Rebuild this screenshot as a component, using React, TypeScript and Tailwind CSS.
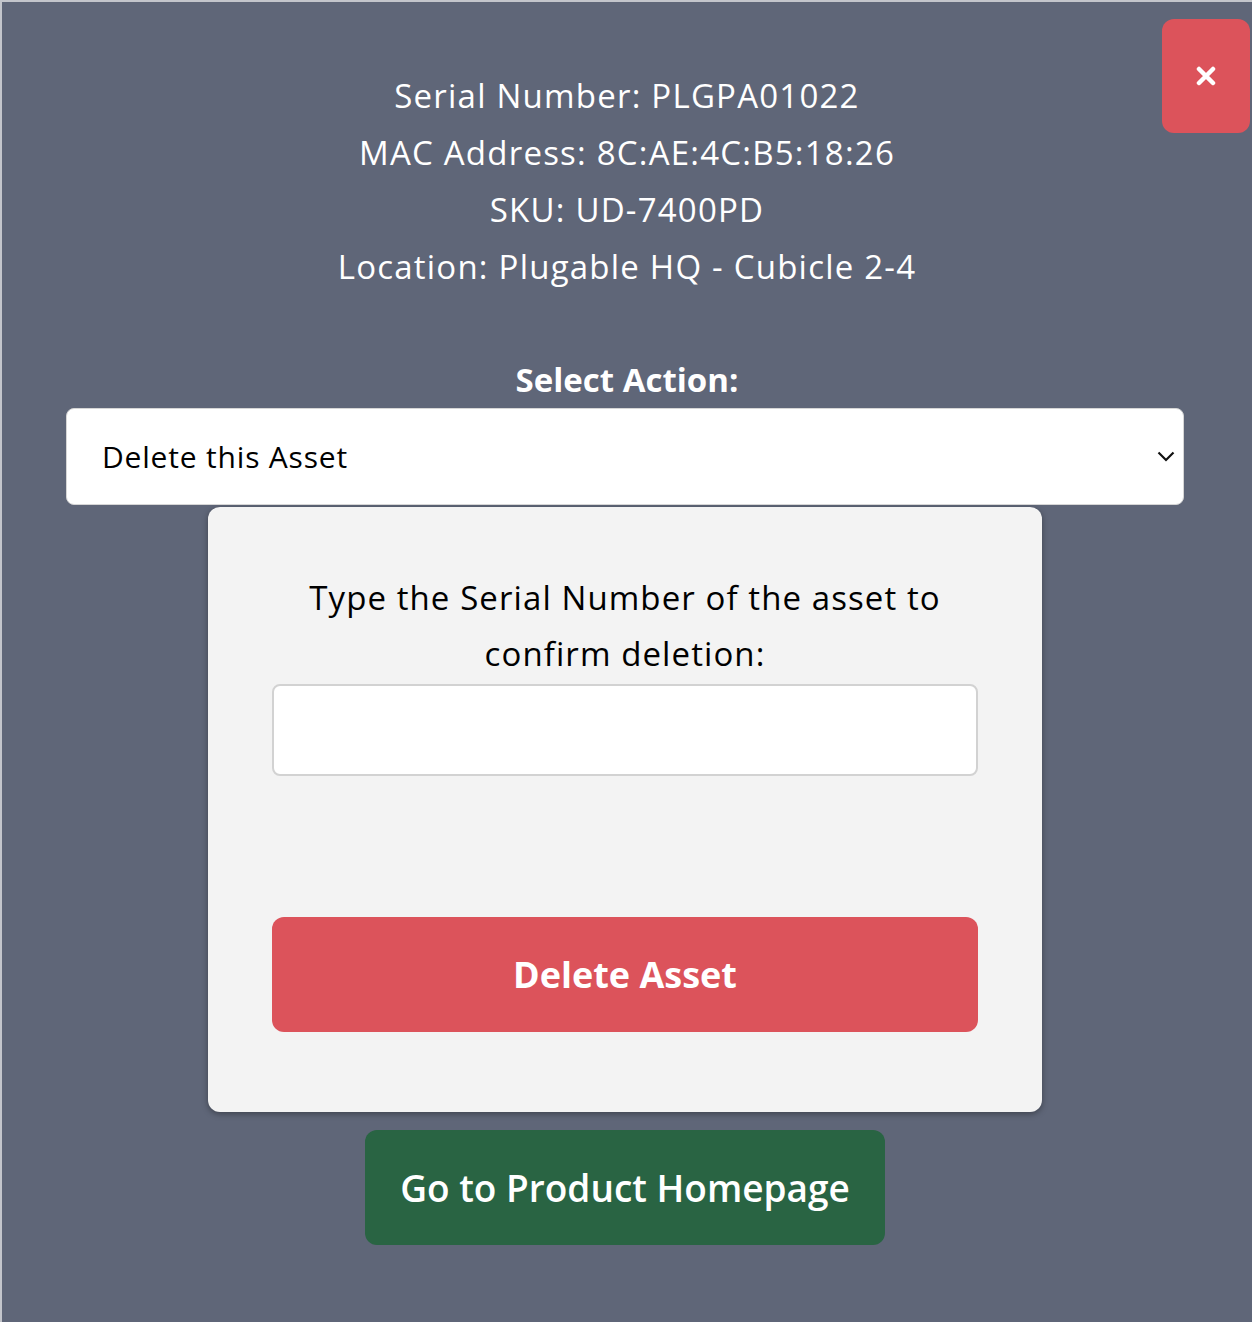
import React, { useState } from 'react';

const infoLines = [
  'Serial Number: PLGPA01022',
  'MAC Address: 8C:AE:4C:B5:18:26',
  'SKU: UD-7400PD',
  'Location: Plugable HQ - Cubicle 2-4',
];

const App: React.FC = () => {
  const [action, setAction] = useState('delete');
  const [serial, setSerial] = useState('');

  return (
    <div
      className="h-[1322px] w-[1252px] overflow-hidden border-l-2 border-t-2 border-[#c3c5cb] bg-[#5f6678] text-white"
      style={{ fontFamily: '"Open Sans", Lato, sans-serif' }}
    >
      <div className="flex justify-end pr-[2px] pt-[17px]">
        <button className="flex h-[114px] w-[88px] items-center justify-center rounded-xl bg-[#dc535b] text-white">
          <svg width="20" height="20" viewBox="0 0 20 20">
            <path d="M3 3 L17 17 M17 3 L3 17" stroke="white" strokeWidth="4.5" strokeLinecap="round" />
          </svg>
        </button>
      </div>

      <div className="-mt-[66px] flex flex-col items-center text-[33px] leading-[57px] tracking-[0.037em]">
        {infoLines.map((line) => (
          <div key={line}>{line}</div>
        ))}
      </div>

      <div className="mt-[56px] text-center text-[33px] font-bold leading-[57px]">Select Action:</div>

      <div className="pl-[64px] pr-[68px]">
        <div className="relative">
          <select
            value={action}
            onChange={(e) => setAction(e.target.value)}
            className="h-[97px] w-full appearance-none rounded-lg border border-[#d6d6d6] bg-white pl-[35px] text-[30px] tracking-[0.027em] text-black outline-none"
          >
            <option value="delete">Delete this Asset</option>
            <option value="move">Move this Asset</option>
          </select>
          <svg
            className="pointer-events-none absolute right-[9px] top-[43px]"
            width="18"
            height="11"
            viewBox="0 0 18 11"
          >
            <path d="M1.5 1.5 L9 9 L16.5 1.5" fill="none" stroke="#111" strokeWidth="2.2" />
          </svg>
        </div>
      </div>

      <div className="ml-[206px] mt-[2px] flex w-[834px] flex-col items-center rounded-xl bg-[#f3f3f3] px-[64px] pb-[80px] pt-[63px] text-black shadow-[0_2px_6px_rgba(0,0,0,0.35)]">
        <p className="whitespace-nowrap text-center text-[33px] leading-[56px] tracking-[0.033em]">
          Type the Serial Number of the asset to
          <br />
          confirm deletion:
        </p>
        <input
          value={serial}
          onChange={(e) => setSerial(e.target.value)}
          className="mt-[2px] h-[92px] w-full rounded-lg border-2 border-[#d2d2d2] bg-white px-4 text-[30px] outline-none"
        />
        <button className="mt-[141px] h-[115px] w-full rounded-xl bg-[#dc535b] text-[36px] font-bold text-white">
          Delete Asset
        </button>
      </div>

      <div className="mt-[18px] flex justify-center pr-[4px]">
        <button className="h-[115px] w-[520px] rounded-xl bg-[#296443] text-[37px] font-semibold text-white">
          Go to Product Homepage
        </button>
      </div>
    </div>
  );
};

export default App;
